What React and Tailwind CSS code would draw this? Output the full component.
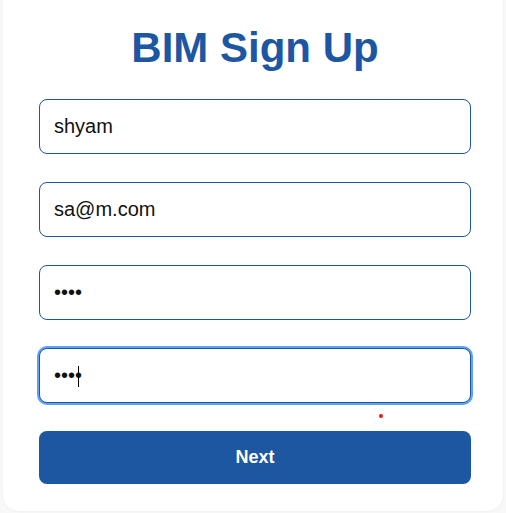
import { useState } from "react";

const SignUp = () => {
  const [formData, setFormData] = useState({
    name: "shyam",
    email: "sa@m.com",
    password: "abcd",
    confirm: "abcd",
  });

  const handleChange = (e) => {
    const { name, value } = e.target;
    setFormData((prev) => ({ ...prev, [name]: value }));
  };

  const inputClass =
    "w-full h-[55px] px-[14px] border border-[#1d56a3] rounded-lg bg-white text-[20px] text-[#111] outline-none";

  return (
    <div className="min-h-screen bg-[#f8f8f8] pl-[3px] pr-[3px] font-['Liberation_Sans',Arial,sans-serif]">
      <div className="bg-white rounded-b-2xl shadow-[0_0_3px_rgba(0,0,0,0.06)] pl-9 pr-[32px] pt-[23px] pb-[27px]">
        <h1 className="text-[42px] leading-[50px] font-bold text-center text-[#1d56a3] mb-[26px]">
          BIM Sign Up
        </h1>
        <form className="flex flex-col gap-7" onSubmit={(e) => e.preventDefault()}>
          <input
            type="text"
            name="name"
            value={formData.name}
            onChange={handleChange}
            className={inputClass}
          />
          <input
            type="email"
            name="email"
            value={formData.email}
            onChange={handleChange}
            className={inputClass}
          />
          <input
            type="password"
            name="password"
            value={formData.password}
            onChange={handleChange}
            className={inputClass}
          />
          <div className="relative">
            <input
              type="password"
              name="confirm"
              value={formData.confirm}
              onChange={handleChange}
              className={`${inputClass} ring-2 ring-[#5ea2f8]`}
            />
            <span className="absolute left-[39px] top-[18px] w-px h-[21px] bg-black" />
            <span className="absolute right-[88px] -bottom-[15px] w-1 h-1 rounded-full bg-[#e8141b]" />
          </div>
          <button
            type="submit"
            className="w-full h-[53px] bg-[#1d57a2] text-white rounded-lg text-[18px] font-bold"
          >
            Next
          </button>
        </form>
      </div>
    </div>
  );
};

export default function App() {
  return <SignUp />;
}
